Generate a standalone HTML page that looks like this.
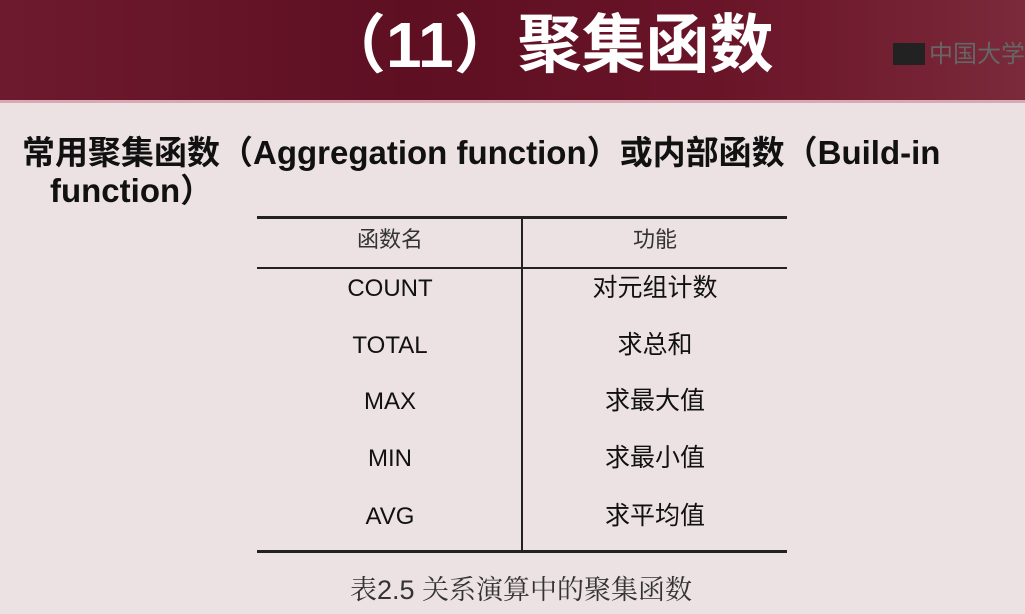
<!DOCTYPE html>
<html><head><meta charset="utf-8"><style>
body{margin:0;width:1025px;height:614px;overflow:hidden;position:relative;background:#ece2e4;font-family:"Liberation Sans","Noto Sans CJK SC",sans-serif;}
.hdr{position:absolute;left:0;top:0;width:1025px;height:100px;background:linear-gradient(90deg,#6e1a2e,#5e0f22 40%,#6a1428 70%,#7a2a3a);}
.hl{position:absolute;left:0;top:100px;width:1025px;height:3px;background:#d8a8b4;}
.title{position:absolute;left:322px;top:0px;color:#fff;font-size:64px;line-height:90px;font-weight:bold;white-space:nowrap;}
.logo{position:absolute;left:893px;top:34px;color:#666;font-size:24px;white-space:nowrap;}
.logo i{display:inline-block;width:32px;height:22px;background:#222;vertical-align:-3px;margin-right:4px}
.t{position:absolute;font-size:33px;line-height:38px;font-weight:bold;color:#111;white-space:nowrap;}
.ln{position:absolute;background:#222;}
.c{position:absolute;width:264px;text-align:center;font-size:24px;line-height:30px;color:#111;}
.z{font-size:25px}
.cap{position:absolute;left:350px;top:573px;font-size:27px;line-height:34px;color:#333;font-family:"Liberation Sans","Noto Serif CJK SC",serif;white-space:nowrap;}
</style></head><body>
<div class="hdr"></div><div class="hl"></div>
<div class="title">（11）聚集函数</div>
<div class="logo"><i></i>中国大学</div>
<div class="t" style="left:22px;top:134px">常用聚集函数（Aggregation function）或内部函数（Build-in</div>
<div class="t" style="left:50px;top:172px">function）</div>
<div class="ln" style="left:257px;top:216px;width:530px;height:3px"></div>
<div class="ln" style="left:257px;top:267px;width:530px;height:2px"></div>
<div class="ln" style="left:521px;top:217px;width:2px;height:334px"></div>
<div class="ln" style="left:257px;top:550px;width:530px;height:3px"></div>
<div class="c" style="left:258px;top:225px;font-size:22px;color:#333">函数名</div>
<div class="c" style="left:523px;top:225px;font-size:22px;color:#333">功能</div>
<div class="c" style="left:258px;top:274px">COUNT</div><div class="c z" style="left:523px;top:273px">对元组计数</div>
<div class="c" style="left:258px;top:331px">TOTAL</div><div class="c z" style="left:523px;top:330px">求总和</div>
<div class="c" style="left:258px;top:387px">MAX</div><div class="c z" style="left:523px;top:386px">求最大值</div>
<div class="c" style="left:258px;top:444px">MIN</div><div class="c z" style="left:523px;top:443px">求最小值</div>
<div class="c" style="left:258px;top:502px">AVG</div><div class="c z" style="left:523px;top:501px">求平均值</div>
<div class="cap">表2.5 关系演算中的聚集函数</div>
</body></html>
